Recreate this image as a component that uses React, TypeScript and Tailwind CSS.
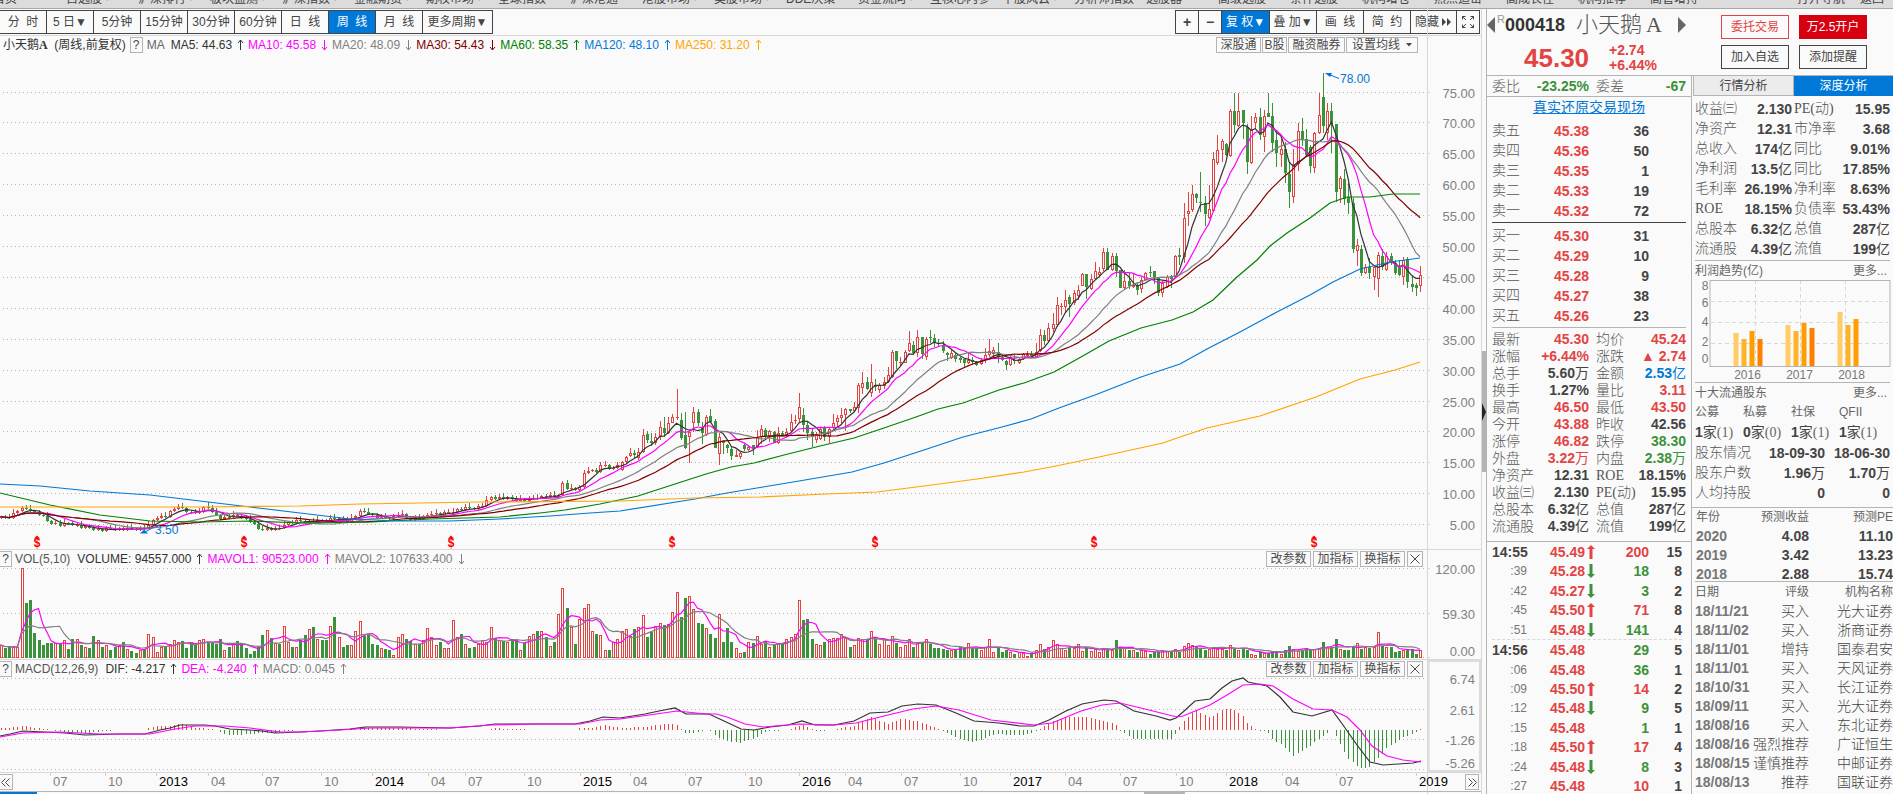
import type { ReactNode } from "react";

type Point = [number, number];

interface Candle {
  up: boolean;
  high: number;
  top: number;
  bottom: number;
  low: number;
}

const RED = "#e24444";
const GREEN = "#3a923a";
const GRID = "#b4b4b4";
const STEP = 4.225;
const FIRST_X = 0.5;

const NAV_ITEMS = [
  "自选股 ·", "沪深排行 ·", "板块监测 ·", "沪深指数 ·", "金融期货 ·", "期权市场 ·", "全球指数", "沪深港通", "港股市场 ·",
  "美股市场 ·", "DDE决策", "资金流向 ·", "互核心内参", "千股风云 ·", "分析师指数", "选股器", "高级选股", "条件选股",
  "机构增仓", "热点追击", "高成长性", "机构推荐", "高管增持",
];

const PERIODS = ["分  时", "5 日▼", "5分钟", "15分钟", "30分钟", "60分钟", "日  线", "周  线", "月  线"];

// close path of the early, flat years: [x, y]
const EARLY_CLOSE: Point[] = [
  [0, 518], [8, 517], [20, 509], [28, 509], [40, 515], [50, 523], [60, 525], [70, 523], [80, 527], [90, 528], [100, 530],
  [120, 529], [135, 529], [148, 527], [152, 520], [158, 516], [165, 517], [172, 510], [178, 506], [185, 511], [192, 514],
  [200, 510], [206, 506], [212, 513], [220, 518], [230, 516], [240, 516], [250, 522], [258, 529], [268, 529], [278, 529],
  [285, 523], [300, 521], [312, 522], [325, 520], [335, 518], [348, 521], [360, 512], [368, 513], [378, 518], [388, 518],
  [400, 514], [408, 519], [420, 518], [432, 513], [440, 515], [455, 510], [470, 508], [478, 507], [484, 504], [490, 497],
  [500, 498], [512, 499], [525, 500], [535, 497], [545, 496], [557, 497], [562, 483], [567, 489], [578, 490], [583, 474],
  [588, 470], [596, 472], [600, 464], [605, 466], [612, 470], [620, 463],
];

// one candle each: colour, then high, top, bottom, low in thirds of a pixel
const MID = `r482,487,510,512 r468,470,487,490 r445,460,468,470 g450,458,465,475 r445,455,475,480 r388,405,455,460 g393,403,420,430
g400,423,430,438 r400,412,430,435 r363,380,408,420 g350,385,400,412 r350,370,398,402 r342,350,368,370 r268,350,352,360
g338,360,415,420 g337,405,443,447 r390,395,410,488 r320,337,370,395 g327,337,370,378 g366,385,398,433 r346,352,404,407
g327,347,365,370 g357,362,443,443 r400,411,463,495 g421,423,430,463 g433,436,445,460 g440,446,468,480 r450,465,470,472
r455,459,472,476 g432,435,448,452 r436,440,449,452 g434,436,443,466 r391,412,442,445 r375,388,412,432 g385,390,412,414
r390,394,408,425 g393,395,430,430 r382,400,430,432 g392,400,404,408 r385,395,405,412 r343,366,394,396 r345,360,362,372
r280,320,358,368 g324,346,374,395 g362,374,400,420 g383,395,412,442 r395,402,420,428 r380,388,418,420 g377,380,410,423
r385,388,412,430 r342,370,384,388 r345,355,366,385 r325,346,354,375 r324,328,345,392 g326,328,334,340 r306,322,334,336
r248,256,325,338 r216,250,265,282 g232,247,268,270 r192,245,278,292 g238,254,262,272 r250,255,270,280 r230,246,258,268
r200,225,245,250 r150,155,232,235 g154,154,184,208 r170,185,190,198 r150,155,188,190 r93,130,152,155 g122,134,160,165
r90,111,160,170 g112,112,163,178 r110,118,170,180 g90,112,115,130 g103,115,126,140 g118,128,132,138 g122,134,154,158
g155,160,164,182 r150,160,175,177 g158,165,176,187 g172,175,180,188 g178,178,190,200 r158,180,188,192 g170,180,185,195
g184,186,195,197 r175,179,193,194 r145,165,180,188 r117,153,164,170 r142,150,163,178 g128,157,172,190 g165,172,180,184
g180,184,196,210 r165,170,196,197 g165,180,184,192 r172,176,188,193 r160,163,178,180 r152,162,168,172 g154,162,168,175
r130,155,172,174 r88,105,152,155 g90,105,122,135 r68,85,122,125 r40,73,86,95 r-8,16,74,82 r10,18,20,45 r-30,0,20,35
g-15,-8,12,50 r-30,-20,10,14 r-44,-30,-12,0`;

const LATE = `r640,643,677,677 g643,643,681,718 r643,658,686,690 r606,634,657,660 r622,636,645,650 r564,577,627,632 g564,577,630,630
r578,588,630,632 g580,588,632,650 g630,630,683,683 r630,662,683,686 g640,662,679,688 r640,676,680,683 g665,676,690,705
r650,660,688,700 r636,640,660,662 g617,636,638,652 g632,634,655,672 g655,655,699,709 r662,670,700,710 r646,652,680,683
g645,649,657,683 r585,589,650,655 g565,585,590,615 r430,475,592,610 r397,454,463,498 r375,402,450,455 g400,402,414,428
g336,425,428,455 g409,430,462,498 r375,446,474,476 r275,297,452,456 r225,270,310,315 r238,242,270,305 g250,252,286,288
r148,153,287,290 g98,153,195,220 r98,153,198,200 g150,150,190,238 g192,200,305,342 r167,210,310,312 r160,172,190,208
g143,172,225,240 r150,168,230,277 g98,160,170,172 g128,168,248,275 g210,240,278,322 r235,268,286,320 g246,268,340,370
g305,343,396,444 r268,313,412,430 r190,213,312,334 g175,214,240,258 g208,238,284,290 g255,260,318,338 r215,220,325,338
r98,166,220,222 g40,110,197,220 r130,154,220,240 g130,153,193,280 g193,193,395,425 r348,355,386,428 g328,357,418,434
g368,410,430,462 g415,430,568,580 r538,555,572,618 g555,566,640,648 r612,622,640,642 g594,620,640,656 r618,622,650,690
r576,586,656,710 g568,588,622,630 r575,588,629,632 g578,588,606,614 g600,608,638,645 g600,618,645,648 r590,600,650,675
g592,598,666,684 g648,672,681,697 g668,674,684,707 r618,644,677,696`;

// bar heights in thirds of a pixel
const VOLUMES = [
  37, 26, 30, 30, 30, 268, 162, 172, 73, 51, 35, 41, 41, 41, 38, 51, 25, 54, 54, 36, 31, 27, 63, 50, 31, 35, 22, 31, 35, 45,
  25, 18, 13, 22, 25, 70, 60, 16, 31, 30, 38, 51, 45, 48, 28, 44, 35, 51, 54, 42, 42, 38, 54, 20, 31, 41, 48, 42, 28, 8,
  18, 30, 66, 81, 58, 42, 40, 93, 44, 31, 31, 50, 67, 85, 90, 53, 50, 50, 93, 120, 60, 30, 36, 36, 77, 107, 63, 65, 40, 36,
  27, 25, 20, 5, 60, 70, 54, 48, 40, 40, 50, 87, 60, 35, 45, 27, 28, 111, 60, 68, 40, 28, 31, 40, 50, 44, 90, 57, 50, 47,
  44, 54, 50, 22, 42, 63, 68, 77, 77, 60, 34, 45, 130, 208, 146, 90, 40, 115, 147, 160, 78, 68, 65, 22, 22, 45, 55,
  78, 83, 63, 83, 91, 127, 61, 75, 93, 103, 96, 100, 136, 196, 121, 178, 184, 145, 103, 100, 88, 68, 58, 130, 46, 88, 46,
  28, 13, 16, 46, 43, 64, 40, 46, 31, 40, 43, 38, 53, 61, 68, 172, 110, 113, 55, 40, 37, 46, 53, 58, 58, 70, 58, 31, 37,
  58, 55, 53, 79, 53, 39, 53, 37, 64, 43, 31, 37, 53, 31, 43, 46, 55, 38, 26, 26, 23, 21, 21, 21, 31, 26, 43, 26, 26, 20,
  31, 53, 16, 28, 16, 20, 14, 10, 14, 12, 4, 9, 20, 38, 24, 30, 50, 38, 26, 22, 28, 28, 38,
  19, 27, 19, 25, 15, 27, 22, 20, 50, 28, 26, 22, 20, 16, 22, 18, 10, 14, 14, 22, 18, 16, 25, 16, 34, 43, 36, 30, 24, 20,
  25, 30, 25, 25, 22, 37, 25, 22, 27, 22, 10, 7, 15, 12, 13, 18, 18, 10, 22, 33, 25, 17, 22, 27, 20, 25, 27, 45, 30, 30,
  54, 25, 22, 22, 34, 43, 25, 30, 26, 30, 75, 33, 30, 30, 16, 19, 22, 25, 25, 10, 22,
];

const MA60: Point[] = [
  [0, 493], [50, 505], [100, 515], [150, 521], [200, 522], [250, 521], [300, 523], [372, 522], [430, 519], [500, 517],
  [540, 513], [565, 510], [600, 504], [638, 496], [675, 484], [706, 474], [731, 467], [754, 463], [784, 455], [820, 446],
  [854, 438], [881, 429], [916, 417], [938, 409], [963, 403], [999, 390], [1024, 383], [1054, 372], [1081, 357],
  [1109, 341], [1141, 328], [1172, 320], [1193, 312], [1213, 300], [1237, 277], [1257, 260], [1270, 246], [1287, 233],
  [1310, 218], [1330, 203], [1347, 197], [1370, 197], [1393, 194], [1420, 194],
];

const MA120: Point[] = [
  [0, 484], [40, 486], [90, 491], [150, 495], [200, 501], [250, 507], [300, 513], [350, 519], [400, 521], [450, 521],
  [500, 519], [550, 516], [590, 513], [620, 511], [695, 499], [727, 493], [763, 487], [799, 481], [852, 472], [884, 463],
  [927, 449], [963, 437], [1002, 427], [1031, 419], [1059, 408], [1095, 395], [1141, 377], [1180, 364], [1207, 349],
  [1240, 332], [1264, 319], [1277, 312], [1310, 295], [1333, 282], [1360, 269], [1390, 262], [1420, 258],
];

const MA250: Point[] = [
  [0, 507], [200, 507], [300, 506], [360, 504], [480, 502], [620, 501], [695, 498], [759, 497], [827, 494], [877, 492],
  [924, 486], [977, 479], [1024, 472], [1056, 466], [1099, 457], [1131, 450], [1163, 443], [1180, 437], [1207, 428],
  [1260, 416], [1316, 397], [1360, 379], [1395, 370], [1420, 362],
];

const DIF: Point[] = [
  [0, 736], [10, 734], [23, 731], [45, 732], [65, 733], [85, 735], [120, 734], [145, 734], [160, 730], [170, 728],
  [180, 725], [205, 725], [215, 726], [230, 729], [250, 730], [262, 731], [275, 733], [300, 732], [320, 731], [350, 729],
  [365, 727], [400, 727], [450, 728], [480, 726], [495, 724], [540, 724], [575, 724], [590, 721], [603, 717], [620, 718],
  [645, 714], [659, 711], [675, 708], [686, 714], [709, 714], [724, 721], [741, 729], [754, 730], [770, 727], [788, 725],
  [802, 721], [815, 725], [834, 725], [854, 721], [870, 713], [888, 712], [902, 706], [918, 704], [936, 705], [956, 713],
  [974, 721], [999, 723], [1020, 726], [1034, 726], [1049, 720], [1066, 711], [1082, 704], [1104, 700], [1116, 701],
  [1134, 711], [1156, 716], [1170, 720], [1176, 718], [1183, 712], [1195, 701], [1210, 699], [1222, 688], [1232, 681],
  [1243, 678], [1248, 682], [1267, 686], [1280, 697], [1293, 712], [1312, 716], [1332, 710], [1343, 725], [1357, 745],
  [1370, 762], [1383, 765], [1413, 763], [1421, 761],
];

const DEA: Point[] = [
  [0, 737], [23, 733], [60, 732], [100, 734], [150, 734], [175, 729], [195, 726], [225, 726], [250, 728], [280, 732],
  [300, 732], [340, 730], [370, 728], [450, 728], [490, 725], [540, 724], [580, 724], [600, 720], [620, 719], [649, 715],
  [677, 711], [706, 714], [716, 714], [727, 717], [745, 724], [763, 727], [799, 724], [834, 725], [856, 723], [884, 716],
  [913, 709], [936, 706], [959, 710], [991, 720], [1034, 725], [1052, 723], [1081, 711], [1102, 705], [1120, 703],
  [1145, 709], [1177, 717], [1183, 716], [1210, 705], [1227, 695], [1243, 685], [1260, 684], [1273, 686], [1293, 699],
  [1313, 709], [1332, 710], [1347, 717], [1360, 730], [1372, 746], [1387, 756], [1403, 760], [1421, 762],
];

const MONTHS: [number, string][] = [
  [50, "07"], [105, "10"], [156, "2013"], [208, "04"], [262, "07"], [321, "10"], [372, "2014"], [428, "04"], [465, "07"],
  [524, "10"], [580, "2015"], [630, "04"], [685, "07"], [745, "10"], [799, "2016"], [845, "04"], [901, "07"], [960, "10"],
  [1010, "2017"], [1065, "04"], [1120, "07"], [1176, "10"], [1226, "2018"], [1282, "04"], [1336, "07"], [1416, "2019"],
];

const DIVIDENDS = [37, 244, 451, 672, 875, 1094, 1314];

function interpolate(points: Point[], x: number) {
  for (let i = 1; i < points.length; i++) {
    const [x0, y0] = points[i - 1];
    const [x1, y1] = points[i];
    if (x <= x1) return y0 + ((y1 - y0) * (x - x0)) / (x1 - x0);
  }
  return points[points.length - 1][1];
}

function parseCandles(text: string, offset: number): Candle[] {
  return text.split(/\s+/).map((item) => {
    const [high, top, bottom, low] = item.slice(1).split(",").map((v) => offset + Number(v) / 3);
    return { up: item[0] === "r", high, top, bottom, low };
  });
}

function earlyCandles(count: number): Candle[] {
  const candles: Candle[] = [];
  let previous = 518;
  for (let i = 0; i < count; i++) {
    const close = interpolate(EARLY_CLOSE, FIRST_X + i * STEP) + (((i * 7) % 5) - 2) * 0.6;
    const top = Math.min(previous, close);
    const bottom = Math.max(previous, close, top + 1);
    candles.push({
      up: close <= previous,
      high: top - 1 - ((i * 5) % 4) * (i === 49 ? 4 : 1),
      top,
      bottom,
      low: bottom + 1 + ((i * 3) % 3),
    });
    previous = close;
  }
  return candles;
}

const CANDLES = [...earlyCandles(147), ...parseCandles(MID, 300), ...parseCandles(LATE, 60)];
const CLOSES = CANDLES.map((c) => (c.up ? c.top : c.bottom));

const xAt = (i: number) => FIRST_X + i * STEP;

function movingAverage(values: number[], length: number): Point[] {
  return values.map((_, i) => {
    const part = values.slice(Math.max(0, i - length + 1), i + 1);
    return [xAt(i), part.reduce((a, b) => a + b, 0) / part.length];
  });
}

const toPoints = (points: Point[]) => points.map(([x, y]) => `${x.toFixed(1)},${y.toFixed(1)}`).join(" ");

function Line({ points, color }: { points: Point[]; color: string }) {
  return <polyline points={toPoints(points)} fill="none" stroke={color} strokeWidth="1.2" />;
}

function GridLines({ ys }: { ys: number[] }) {
  return (
    <g shapeRendering="crispEdges">
      {ys.map((y) => (
        <g key={y}>
          <line x1="3" x2="1426" y1={y} y2={y} stroke={GRID} strokeDasharray="1 3" />
          <line x1="1428" x2="1430" y1={y} y2={y} stroke="#d8d8d8" />
        </g>
      ))}
      <line x1="1427.5" x2="1427.5" y1="0" y2="800" stroke="#d8d8d8" />
    </g>
  );
}

function AxisText({ y, children }: { y: number; children: ReactNode }) {
  return (
    <text x="1475" y={y + 4} textAnchor="end" fontSize="13" fill="#808080">
      {children}
    </text>
  );
}

function Bar({ x, top, bottom, up }: { x: number; top: number; bottom: number; up: boolean }) {
  const left = Math.round(x) - 1;
  const y = Math.round(top);
  const height = Math.max(1, Math.round(bottom) - y);
  return up && height > 1 ? (
    <rect x={left + 0.5} y={y + 0.5} width="2" height={height - 1} fill="#fafafa" stroke={RED} />
  ) : (
    <rect x={left} y={y} width="3" height={height} fill={up ? RED : GREEN} />
  );
}

function PriceChart() {
  const prices = Array.from({ length: 15 }, (_, i) => 75 - i * 5);
  const priceY = (p: number) => Math.round(555 - p * 6.18) + 0.5;
  return (
    <svg viewBox="0 54 1481 495" preserveAspectRatio="none" className="block min-h-0 w-full flex-1">
      <GridLines ys={prices.map(priceY)} />
      {prices.map((p) => (
        <AxisText key={p} y={priceY(p) + 1}>
          {p.toFixed(2)}
        </AxisText>
      ))}
      <g shapeRendering="crispEdges">
        {CANDLES.map((c, i) => (
          <g key={i}>
            <line
              x1={Math.round(xAt(i)) + 0.5}
              x2={Math.round(xAt(i)) + 0.5}
              y1={c.high}
              y2={c.low}
              stroke={c.up ? RED : GREEN}
            />
            <Bar x={xAt(i)} top={c.top} bottom={c.bottom} up={c.up} />
          </g>
        ))}
      </g>
      <Line points={movingAverage(CLOSES, 5)} color="#333333" />
      <Line points={movingAverage(CLOSES, 10)} color="#ff00ff" />
      <Line points={movingAverage(CLOSES, 20)} color="#808080" />
      <Line points={movingAverage(CLOSES, 30)} color="#800000" />
      <Line points={MA60} color="#008000" />
      <Line points={MA120} color="#0078d7" />
      <Line points={MA250} color="#ffa500" />
      <g fill="#0078d7" stroke="none" fontFamily="Liberation Sans" fontSize="12">
        <path d="M1325 73l7 0-2 4z" />
        <path d="M1329 74.500l10 4" stroke="#0078d7" />
        <text x="1340" y="83">78.00</text>
        <path d="M140 533.500h8l-4-4z" />
        <path d="M145 532l9-5" stroke="#0078d7" />
        <text x="155" y="534">3.50</text>
      </g>
      <g fill="#ff0000" fontFamily="Liberation Sans" fontSize="12" fontWeight="bold">
        {DIVIDENDS.map((x) => (
          <g key={x}>
            <path d={`M${x} 535.500l3 3h-6z`} />
            <text x={x} y="547" textAnchor="middle">
              $
            </text>
          </g>
        ))}
      </g>
    </svg>
  );
}

function VolumeChart() {
  const ys = VOLUMES.map((v) => 657 - v / 3);
  return (
    <svg viewBox="0 568 1481 91" preserveAspectRatio="none" className="block min-h-0 w-full flex-1 overflow-visible">
      <GridLines ys={[568.5, 613.5, 657.5]} />
      <AxisText y={570}>120.00</AxisText>
      <AxisText y={615}>59.30</AxisText>
      <AxisText y={652}>0.00</AxisText>
      <g shapeRendering="crispEdges">
        {ys.map((y, i) => (
          <Bar key={i} x={xAt(i)} top={y} bottom={658} up={CANDLES[i].up} />
        ))}
      </g>
      <Line points={movingAverage(ys, 5)} color="#ff00ff" />
      <Line points={movingAverage(ys, 10)} color="#808080" />
    </svg>
  );
}

function MacdChart() {
  return (
    <svg viewBox="0 678 1481 94" preserveAspectRatio="none" className="block min-h-0 w-full flex-1 overflow-visible">
      <GridLines ys={[678.5, 709.5, 739.5, 769.5]} />
      <AxisText y={680}>6.74</AxisText>
      <AxisText y={711}>2.61</AxisText>
      <AxisText y={741}>-1.26</AxisText>
      <AxisText y={764}>-5.26</AxisText>
      <path d="M1428.500 661H1480V771H1428.500z" fill="none" stroke="#dcdcdc" strokeWidth="2" />
      <g shapeRendering="crispEdges">
        {CANDLES.map((_, i) => {
          const delta = 2 * (interpolate(DEA, xAt(i)) - interpolate(DIF, xAt(i)));
          const x = Math.round(xAt(i)) + 0.5;
          return <line key={i} x1={x} x2={x} y1="730" y2={730 - delta} stroke={delta > 0 ? RED : GREEN} />;
        })}
      </g>
      <Line points={DIF} color="#333333" />
      <Line points={DEA} color="#ff00ff" />
    </svg>
  );
}

function Arrow({ down = false }: { down?: boolean }) {
  return (
    <svg viewBox="0 0 7 12" className="mr-[4px] ml-[5px] h-[12px] w-[7px] shrink-0" fill="none" stroke="currentColor">
      <path d={down ? "M3.500 1v10M1 8l2.500 3L6 8" : "M3.500 11V1M1 4l2.500-3L6 4"} />
    </svg>
  );
}

function Reading({ color, down, children }: { color: string; down?: boolean; children: ReactNode }) {
  return (
    <span className={`flex items-center ${color}`}>
      {children}
      <Arrow down={down} />
    </span>
  );
}

function SmallButton({ className = "", children, label }: { className?: string; children: ReactNode; label?: string }) {
  return (
    <button
      type="button"
      aria-label={label}
      className={`flex h-[16px] items-center justify-center border border-[#b4b4b4] bg-[#fafafa] text-[12px] leading-[14px] whitespace-nowrap text-[#4a4a4a] ${className}`}
    >
      {children}
    </button>
  );
}

function PanelHeader({ readings, buttons }: { readings: ReactNode; buttons: ReactNode }) {
  return (
    <div className="flex h-[18px] shrink-0 text-[12px] leading-[16px] whitespace-nowrap">
      <div className="flex min-w-0 flex-1 items-center justify-between border-r border-[#d8d8d8]">
        <div className="flex items-center">{readings}</div>
        {buttons}
      </div>
      <div className="w-[53px] shrink-0" />
    </div>
  );
}

function IndicatorButtons() {
  return (
    <div className="flex gap-[2px] pr-[4px]">
      <SmallButton className="w-[45px]">改参数</SmallButton>
      <SmallButton className="w-[45px]">加指标</SmallButton>
      <SmallButton className="w-[45px]">换指标</SmallButton>
      <SmallButton className="w-[16px]" label="关闭">
        <svg viewBox="0 0 10 10" className="h-[10px] w-[10px] shrink-0" stroke="#4a4a4a">
          <path d="M.5.5l9 9M9.500.5l-9 9" />
        </svg>
      </SmallButton>
    </div>
  );
}

function ToolButton({ active = false, className, children, label }: { active?: boolean; className: string; children: ReactNode; label?: string }) {
  return (
    <button
      type="button"
      aria-label={label}
      className={`-mr-px flex h-[24px] items-center justify-center border border-[#444] leading-[20px] whitespace-pre ${
        active ? "bg-[#0078d7] text-white" : "bg-[#fafafa] text-[#444]"
      } ${className}`}
    >
      {children}
    </button>
  );
}

function Toolbar() {
  return (
    <div className="flex h-[27px] shrink-0 items-center justify-between border-b border-[#d8d8d8] text-[12px]">
      <div className="-ml-px flex">
        {PERIODS.map((p) => (
          <ToolButton key={p} active={p === "周  线"} className="w-[48px]">
            {p}
          </ToolButton>
        ))}
        <ToolButton className="w-[71px]">更多周期▼</ToolButton>
      </div>
      <div className="flex pr-[2px]">
        <ToolButton className="w-[24px] text-[14px] font-bold">+</ToolButton>
        <ToolButton className="w-[24px] text-[14px] font-bold">−</ToolButton>
        <ToolButton active className="w-[49px]">复 权▼</ToolButton>
        <ToolButton className="w-[48px]">叠 加▼</ToolButton>
        <ToolButton className="w-[48px]">画  线</ToolButton>
        <ToolButton className="w-[48px]">简  约</ToolButton>
        <ToolButton className="w-[47px]">
          隐藏
          <svg viewBox="0 0 10 8" className="ml-[3px] h-[8px] w-[10px]" fill="#444">
            <path d="M0 0l4 4-4 4zM5 0l4 4-4 4z" />
          </svg>
        </ToolButton>
        <ToolButton className="w-[24px]" label="全屏">
          <svg viewBox="0 0 14 14" className="h-[14px] w-[14px] shrink-0" fill="none" stroke="#444">
            <path d="M1.500 4.500v-3h3M1.500 1.500l3.500 3.500M9.500 1.500h3v3M12.500 1.500L9 5M1.500 9.500v3h3M1.500 12.500L5 9M12.500 9.500v3h-3M12.500 12.500L9 9" />
          </svg>
        </ToolButton>
      </div>
    </div>
  );
}

function TimeAxis() {
  return (
    <div className="relative h-[18px] shrink-0">
      <svg viewBox="0 773 1481 18" preserveAspectRatio="none" className="block h-full w-full">
        {MONTHS.map(([x, label]) => (
          <g key={x}>
            <line x1={x + 0.5} x2={x + 0.5} y1="773" y2="776" stroke="#d0d0d0" />
            <text x={x + 3} y="786" fontSize="13" fill={label.length > 2 ? "#000" : "#808080"}>
              {label}
            </text>
          </g>
        ))}
      </svg>
      <SmallButton className="absolute top-px left-[-2px] w-[15px]" label="向前">
        <svg viewBox="0 0 9 9" className="h-[9px] w-[9px] shrink-0" fill="none" stroke="#4a4a4a">
          <path d="M4.500.5l-4 4 4 4M8.500.5l-4 4 4 4" />
        </svg>
      </SmallButton>
      <SmallButton className="absolute top-px right-[2px] w-[14px]" label="向后">
        <svg viewBox="0 0 9 9" className="h-[9px] w-[9px] shrink-0" fill="none" stroke="#4a4a4a">
          <path d="M.5.5l4 4-4 4M4.500.5l4 4-4 4" />
        </svg>
      </SmallButton>
    </div>
  );
}

function ChartArea() {
  return (
    <main className="flex min-w-0 flex-1 flex-col">
      <Toolbar />
      <section className="flex min-h-0 flex-1 flex-col border-b border-[#d8d8d8]">
        <PanelHeader
          readings={
            <>
              <span className="pl-[3px] text-[#333]">
                小天鹅<b className="font-['Liberation_Serif']">A</b>&nbsp; (周线,前复权)
              </span>
              <SmallButton className="mx-[4px] w-[13px]">?</SmallButton>
              <span className="mr-[6px] text-[#666]">MA</span>
              <Reading color="text-[#333]">MA5: 44.63</Reading>
              <Reading color="text-[#f0f]" down>MA10: 45.58</Reading>
              <Reading color="text-[#808080]" down>MA20: 48.09</Reading>
              <Reading color="text-[#800000]" down>MA30: 54.43</Reading>
              <Reading color="text-[#008000]">MA60: 58.35</Reading>
              <Reading color="text-[#0078d7]">MA120: 48.10</Reading>
              <Reading color="text-[#ffa500]">MA250: 31.20</Reading>
            </>
          }
          buttons={
            <div className="flex gap-px pr-[9px]">
              <SmallButton className="w-[45px]">深股通</SmallButton>
              <SmallButton className="w-[25px]">B股</SmallButton>
              <SmallButton className="w-[57px]">融资融券</SmallButton>
              <SmallButton className="w-[72px]">
                设置均线
                <svg viewBox="0 0 6 4" className="ml-[6px] h-[4px] w-[6px]" fill="#4a4a4a">
                  <path d="M0 0h6L3 3.500z" />
                </svg>
              </SmallButton>
            </div>
          }
        />
        <PriceChart />
      </section>
      <section className="flex h-[110px] shrink-0 flex-col border-b border-[#d8d8d8]">
        <PanelHeader
          readings={
            <>
              <SmallButton className="-ml-px mr-[3px] w-[13px]">?</SmallButton>
              <span className="mr-[7px] text-[#555]">VOL(5,10)</span>
              <Reading color="text-[#333]">VOLUME: 94557.000</Reading>
              <Reading color="text-[#f0f]">MAVOL1: 90523.000</Reading>
              <Reading color="text-[#808080]" down>MAVOL2: 107633.400</Reading>
            </>
          }
          buttons={<IndicatorButtons />}
        />
        <VolumeChart />
      </section>
      <section className="flex h-[113px] shrink-0 flex-col border-b border-[#d8d8d8]">
        <PanelHeader
          readings={
            <>
              <SmallButton className="-ml-px mr-[3px] w-[13px]">?</SmallButton>
              <span className="mr-[7px] text-[#555]">MACD(12,26,9)</span>
              <Reading color="text-[#333]">DIF: -4.217</Reading>
              <Reading color="text-[#f0f]">DEA: -4.240</Reading>
              <Reading color="text-[#808080]">MACD: 0.045</Reading>
            </>
          }
          buttons={<IndicatorButtons />}
        />
        <MacdChart />
      </section>
      <TimeAxis />
      <div className="flex h-[3px] shrink-0 border-t border-[#b4b4b4]">
        <div className="w-[37px] bg-[#0078d7]" />
        <div className="flex-1" />
        <div className="mr-[296px] w-[41px] bg-[#b4b4b4]" />
      </div>
    </main>
  );
}

const R = "text-[#e24444]";
const G = "text-[#3a923a]";
const D = "text-[#444]";
const B = "text-[#0078d7]";

const SELLS = [["卖五", "45.38", "36"], ["卖四", "45.36", "50"], ["卖三", "45.35", "1"], ["卖二", "45.33", "19"], ["卖一", "45.32", "72"]];
const BUYS = [["买一", "45.30", "31"], ["买二", "45.29", "10"], ["买三", "45.28", "9"], ["买四", "45.27", "38"], ["买五", "45.26", "23"]];

const STATS = [
  ["最新", "45.30", R, "均价", "45.24", R],
  ["涨幅", "+6.44%", R, "涨跌", "▲ 2.74", R],
  ["总手", "5.60万", D, "金额", "2.53亿", B],
  ["换手", "1.27%", D, "量比", "3.11", R],
  ["最高", "46.50", R, "最低", "43.50", R],
  ["今开", "43.88", R, "昨收", "42.56", D],
  ["涨停", "46.82", R, "跌停", "38.30", G],
  ["外盘", "3.22万", R, "内盘", "2.38万", G],
  ["净资产", "12.31", D, "ROE", "18.15%", D],
  ["收益㈢", "2.130", D, "PE(动)", "15.95", D],
  ["总股本", "6.32亿", D, "总值", "287亿", D],
  ["流通股", "4.39亿", D, "流值", "199亿", D],
];

const DEPTH = [
  ["收益㈢", "2.130", D, "PE(动)", "15.95", D],
  ["净资产", "12.31", D, "市净率", "3.68", D],
  ["总收入", "174亿", D, "同比", "9.01%", D],
  ["净利润", "13.5亿", D, "同比", "17.85%", D],
  ["毛利率", "26.19%", D, "净利率", "8.63%", D],
  ["ROE", "18.15%", D, "负债率", "53.43%", D],
  ["总股本", "6.32亿", D, "总值", "287亿", D],
  ["流通股", "4.39亿", D, "流值", "199亿", D],
];

const TRADES: [string, string, "" | "up" | "down", string, string, string][] = [
  ["14:55", "45.49", "up", "200", R, "15"],
  [":39", "45.28", "down", "18", G, "8"],
  [":42", "45.27", "down", "3", G, "2"],
  [":45", "45.50", "up", "71", R, "8"],
  [":51", "45.48", "down", "141", G, "4"],
  ["14:56", "45.48", "", "29", G, "5"],
  [":06", "45.48", "", "36", G, "1"],
  [":09", "45.50", "up", "14", R, "2"],
  [":12", "45.48", "down", "9", G, "5"],
  [":15", "45.48", "", "1", G, "1"],
  [":18", "45.50", "up", "17", R, "4"],
  [":24", "45.48", "down", "8", G, "3"],
  [":27", "45.48", "", "10", R, "1"],
];

const RATINGS = [
  ["18/11/21", "买入", "光大证券"],
  ["18/11/02", "买入", "浙商证券"],
  ["18/11/01", "增持", "国泰君安"],
  ["18/11/01", "买入", "天风证券"],
  ["18/10/31", "买入", "长江证券"],
  ["18/09/11", "买入", "光大证券"],
  ["18/08/16", "买入", "东北证券"],
  ["18/08/16", "强烈推荐", "广证恒生"],
  ["18/08/15", "谨慎推荐", "中邮证券"],
  ["18/08/13", "推荐", "国联证券"],
];

const LABEL = "p-0 text-left font-light font-['Liberation_Serif','Noto_Sans_CJK_SC',serif] text-[#555]";

// numbers are bold, the unit after them is not
function Value({ children }: { children: string }) {
  const [, number, unit] = children.match(/^(.*?)([万亿]?)$/) ?? ["", children, ""];
  return (
    <>
      <b>{number}</b>
      {unit}
    </>
  );
}

function OrderTable({ rows }: { rows: string[][] }) {
  return (
    <table className="w-full table-fixed text-[14px] leading-[20px]">
      <tbody>
        {rows.map(([label, price, volume]) => (
          <tr key={label} className="h-[20px]">
            <th className={`w-[42px] ${LABEL}`}>{label}</th>
            <td className={`w-[55px] p-0 text-right font-bold ${R}`}>{price}</td>
            <td className={`w-[60px] p-0 text-right font-bold ${D}`}>{volume}</td>
            <td className="p-0" />
          </tr>
        ))}
      </tbody>
    </table>
  );
}

function PairTable({ rows, row, gap }: { rows: string[][]; row: string; gap: string }) {
  return (
    <table className="w-full text-[14px] whitespace-nowrap">
      <tbody>
        {rows.map(([label, value, color, label2, value2, color2]) => (
          <tr key={label} className={row}>
            <th className={`w-[42px] ${LABEL}`}>{label}</th>
            <td className={`w-[55px] p-0 text-right ${color}`}>
              <Value>{value}</Value>
            </td>
            <th className={`${LABEL} ${gap}`}>{label2}</th>
            <td className={`p-0 text-right ${color2}`}>
              <Value>{value2}</Value>
            </td>
          </tr>
        ))}
      </tbody>
    </table>
  );
}

function TradeArrow({ dir }: { dir: "" | "up" | "down" }) {
  if (!dir) return null;
  return (
    <svg viewBox="0 0 8 14" className="h-[14px] w-[8px]" fill={dir === "up" ? RED : GREEN}>
      <path d={dir === "up" ? "M4 0l4 4H5.500v10h-3V4H0z" : "M4 14l4-4H5.500V0h-3v10H0z"} />
    </svg>
  );
}

function Trades() {
  return (
    <div className="flex h-[255px] shrink-0 flex-col border-t border-[#b4b4b4] pr-[9px] pl-[5px]">
      {TRADES.map(([time, price, dir, volume, color, count]) => (
        <div
          key={time}
          className={`flex flex-1 items-center text-right text-[14px] leading-[18px] ${
            time === "14:56" ? "border-t border-dashed border-[#d8d8d8]" : ""
          }`}
        >
          <span className={`w-[35px] ${time.length > 3 ? "font-bold text-[#444]" : "text-[12px] text-[#777]"}`}>{time}</span>
          <span className={`w-[58px] font-bold ${R}`}>{price}</span>
          <span className="flex w-[12px] pl-[2px]">
            <TradeArrow dir={dir} />
          </span>
          <span className={`w-[52px] font-bold ${color}`}>{volume}</span>
          <span className="flex-1 font-bold text-[#444]">{count}</span>
        </div>
      ))}
    </div>
  );
}

const PROFITS: [number, number, string][] = [
  [254, 73, "#ffcc66"], [262, 79, "#ffb428"], [270, 71, "#ff9e00"], [278, 79, "#ff8000"],
  [306, 65, "#ffcc66"], [314, 71, "#ffb428"], [322, 63, "#ff9e00"], [330, 68, "#ff8000"],
  [358, 52, "#ffcc66"], [366, 65, "#ffb428"], [374, 59, "#ff9e00"],
];

function ProfitChart() {
  return (
    <svg viewBox="213 20 200 102" className="block h-[102px] w-full" fontFamily="Liberation Sans" fontSize="12" fill="#777">
      <g stroke="#d8d8d8" strokeDasharray="4 3" shapeRendering="crispEdges">
        <path d="M231 41.500H408M231 62.500H408M231 83.500H408M275.500 20V106M320.500 20V106M365.500 20V106" />
      </g>
      <rect x="230.500" y="20.500" width="180" height="86" fill="none" stroke="#b4b4b4" />
      {PROFITS.map(([x, y, color]) => (
        <rect key={x} x={x} y={y} width="5" height={106 - y} fill={color} />
      ))}
      {["8", "6", "4", "2", "0"].map((label, i) => (
        <text key={label} x="229" y={[30, 47, 66, 86, 103][i]} textAnchor="end">
          {label}
        </text>
      ))}
      {["2016", "2017", "2018"].map((label, i) => (
        <text key={label} x={268 + i * 52} y="119" textAnchor="middle">
          {label}
        </text>
      ))}
    </svg>
  );
}

function SectionTitle({ title }: { title: string }) {
  return (
    <div className="mx-[3px] flex h-[20px] items-center justify-between border-t border-[#b4b4b4] pr-[3px] text-[12px] leading-[18px] text-[#666]">
      <h3>{title}</h3>
      <a href="#more">更多...</a>
    </div>
  );
}

function QuoteColumn() {
  return (
    <div className="flex w-[205px] shrink-0 flex-col border-r border-[#b4b4b4]">
      <div className="flex h-[21px] shrink-0 items-center border-b border-[#b4b4b4] px-[5px] text-[14px]">
        <span className={LABEL}>委比</span>
        <b className={`w-[69px] text-right ${G}`}>-23.25%</b>
        <span className={`ml-[7px] ${LABEL}`}>委差</span>
        <b className={`flex-1 text-right ${G}`}>-67</b>
      </div>
      <div className="h-[24px] shrink-0 text-center text-[14px] leading-[20px]">
        <a href="#replay" className="text-[#0078d7] underline">真实还原交易现场</a>
      </div>
      <div className="mx-[5px]">
        <OrderTable rows={SELLS} />
        <div className="mt-px border-t border-[#444] pt-[3px]">
          <OrderTable rows={BUYS} />
        </div>
        <div className="mt-px mb-[6px] border-t border-[#b4b4b4] pt-[3px]">
          <PairTable rows={STATS} row="h-[17px] leading-[17px]" gap="pl-[7px]" />
        </div>
      </div>
      <Trades />
    </div>
  );
}

function DepthColumn() {
  return (
    <div className="min-w-0 flex-1 overflow-hidden">
      <div className="mb-[3px] ml-px flex h-[20px] text-[12px]">
        <button type="button" className="flex-1 border-r border-b border-l border-[#b4b4b4] bg-[#ececec] text-[#444]">行情分析</button>
        <button type="button" className="flex-1 bg-[#0078d7] text-white">深度分析</button>
      </div>
      <div className="mx-[3px] mb-px">
        <PairTable rows={DEPTH} row="h-[20px] leading-[20px]" gap="pl-[2px]" />
      </div>
      <SectionTitle title="利润趋势(亿)" />
      <ProfitChart />
      <SectionTitle title="十大流通股东" />
      <table className="ml-[3px] w-[192px] table-fixed text-left">
        <thead>
          <tr className="h-[20px] text-[12px] leading-[20px] text-[#666]">
            {["公募", "私募", "社保", "QFII"].map((name) => (
              <th key={name} className="p-0 font-normal">{name}</th>
            ))}
          </tr>
        </thead>
        <tbody>
          <tr className="h-[20px] text-[14px] leading-[20px] whitespace-nowrap text-[#444]">
            {["1", "0", "1", "1"].map((n, i) => (
              <td key={i} className="p-0">
                <b>{n}</b>家<span className="font-['Liberation_Serif'] text-[#666]">({n})</span>
              </td>
            ))}
          </tr>
        </tbody>
      </table>
      <table className="mx-[3px] mb-[4px] w-[195px] text-right text-[14px] leading-[20px] text-[#444]">
        <tbody>
          {[["股东情况", "18-09-30", "18-06-30"], ["股东户数", "1.96万", "1.70万"], ["人均持股", "0", "0"]].map(([label, a, b]) => (
            <tr key={label} className="h-[20px]">
              <th className={LABEL}>{label}</th>
              <td className="w-[74px] p-0"><Value>{a}</Value></td>
              <td className="w-[65px] p-0"><Value>{b}</Value></td>
            </tr>
          ))}
        </tbody>
      </table>
      <div className="border-t border-[#b4b4b4] pl-[4px]">
        <table className="-mb-[2px] w-full table-fixed text-right text-[14px] leading-[18px] text-[#444]">
          <thead>
            <tr className="h-[18px] text-[12px] text-[#666]">
              <th className="w-[50px] p-0 text-left font-normal">年份</th>
              <th className="w-[63px] p-0 font-normal">预测收益</th>
              <th className="p-0 font-normal">预测PE</th>
            </tr>
          </thead>
          <tbody className="font-bold">
            {[["2020", "4.08", "11.10"], ["2019", "3.42", "13.23"], ["2018", "2.88", "15.74"]].map(([year, profit, pe]) => (
              <tr key={year} className="h-[19px]">
                <td className="p-0 text-left text-[#777]">{year}</td>
                <td className="p-0">{profit}</td>
                <td className="p-0">{pe}</td>
              </tr>
            ))}
          </tbody>
        </table>
      </div>
      <div className="ml-[3px] border-t border-[#b4b4b4]">
        <table className="w-full table-fixed text-right text-[14px] leading-[18px] whitespace-nowrap text-[#444]">
          <thead>
            <tr className="h-[19px] text-[12px] text-[#666]">
              <th className="w-[56px] p-0 text-left font-normal">日期</th>
              <th className="w-[58px] p-0 font-normal">评级</th>
              <th className="p-0 font-normal">机构名称</th>
            </tr>
          </thead>
          <tbody>
            {RATINGS.map(([date, rating, org]) => (
              <tr key={org + date} className="h-[19px]">
                <td className="p-0 text-left font-bold text-[#777]">{date}</td>
                <td className="p-0 font-light">{rating}</td>
                <td className="p-0 font-light">{org}</td>
              </tr>
            ))}
          </tbody>
        </table>
      </div>
    </div>
  );
}

function QuotePanel() {
  const button = "h-[24px] w-[68px] border text-[12px] leading-[20px]";
  return (
    <aside className="flex w-[407px] shrink-0 flex-col border-l border-[#b4b4b4]">
      <header className="flex h-[67px] shrink-0 justify-between border-b border-[#b4b4b4] pr-[26px]">
        <div>
          <div className="flex h-[32px] items-center">
            <button type="button" aria-label="上一只">
              <svg viewBox="0 0 8 16" className="h-[16px] w-[8px]" fill="#666">
                <path d="M8 0v16L0 8z" />
              </svg>
            </button>
            <span className="mt-[-12px] ml-[2px] text-[11px] leading-[12px] text-[#999]">R</span>
            <b className="text-[18px] text-[#333]">000418</b>
            <h1 className="ml-[11px] w-[92px] text-[22px] leading-[28px] font-light whitespace-nowrap text-[#555]">
              小天鹅<span className="ml-[4px] font-['Liberation_Serif']">A</span>
            </h1>
            <button type="button" aria-label="下一只" className="ml-[10px]">
              <svg viewBox="0 0 8 16" className="h-[16px] w-[8px]" fill="#666">
                <path d="M0 0v16L8 8z" />
              </svg>
            </button>
          </div>
          <div className={`flex items-center pl-[37px] font-bold ${R}`}>
            <span className="w-[85px] text-[26px] leading-[34px]">45.30</span>
            <span className="text-[14px] leading-[15px]">
              +2.74
              <br />
              +6.44%
            </span>
          </div>
        </div>
        <div className="grid grid-cols-2 content-center gap-x-[10px] gap-y-[6px] text-[#444]">
          <button type="button" className={`${button} border-[#e24444] text-[#e24444]`}>委托交易</button>
          <button type="button" className={`${button} border-[#d7000f] bg-[#d7000f] text-white`}>万2.5开户</button>
          <button type="button" className={`${button} border-[#444]`}>加入自选</button>
          <button type="button" className={`${button} border-[#444]`}>添加提醒</button>
        </div>
      </header>
      <div className="flex min-h-0 flex-1 overflow-hidden">
        <QuoteColumn />
        <DepthColumn />
      </div>
    </aside>
  );
}

export default function App() {
  return (
    <div className="flex h-screen flex-col overflow-hidden bg-[#fafafa] font-['Liberation_Sans','Noto_Sans_CJK_SC',sans-serif]">
      <nav className="h-[9px] shrink-0 overflow-hidden border-b border-[#a8a8a8] bg-[#dcdcdc]">
        <div className="-mt-[9px] flex text-[12px] leading-[16px] whitespace-nowrap text-[#444]">
          <a href="#home" className="-ml-[7px] w-[73px]">首页</a>
          {NAV_ITEMS.map((item) => (
            <a key={item} href="#nav" className="w-[72px]">{item}</a>
          ))}
          <span className="flex-1">"</span>
          <a href="#guide" className="mr-[15px]">打开导航</a>
          <a href="#back" className="mr-[9px]">返回</a>
        </div>
      </nav>
      <div className="flex min-h-0 flex-1">
        <ChartArea />
        <div className="flex w-[5px] shrink-0 flex-col border-l border-[#d8d8d8]">
          <div className="mt-[342px] flex h-[121px] items-center bg-[#b4b4b4]">
            <svg viewBox="0 0 4 18" className="h-[18px] w-[4px]" fill="#222">
              <path d="M0 0l4 9-4 9z" />
            </svg>
          </div>
        </div>
        <QuotePanel />
      </div>
    </div>
  );
}
